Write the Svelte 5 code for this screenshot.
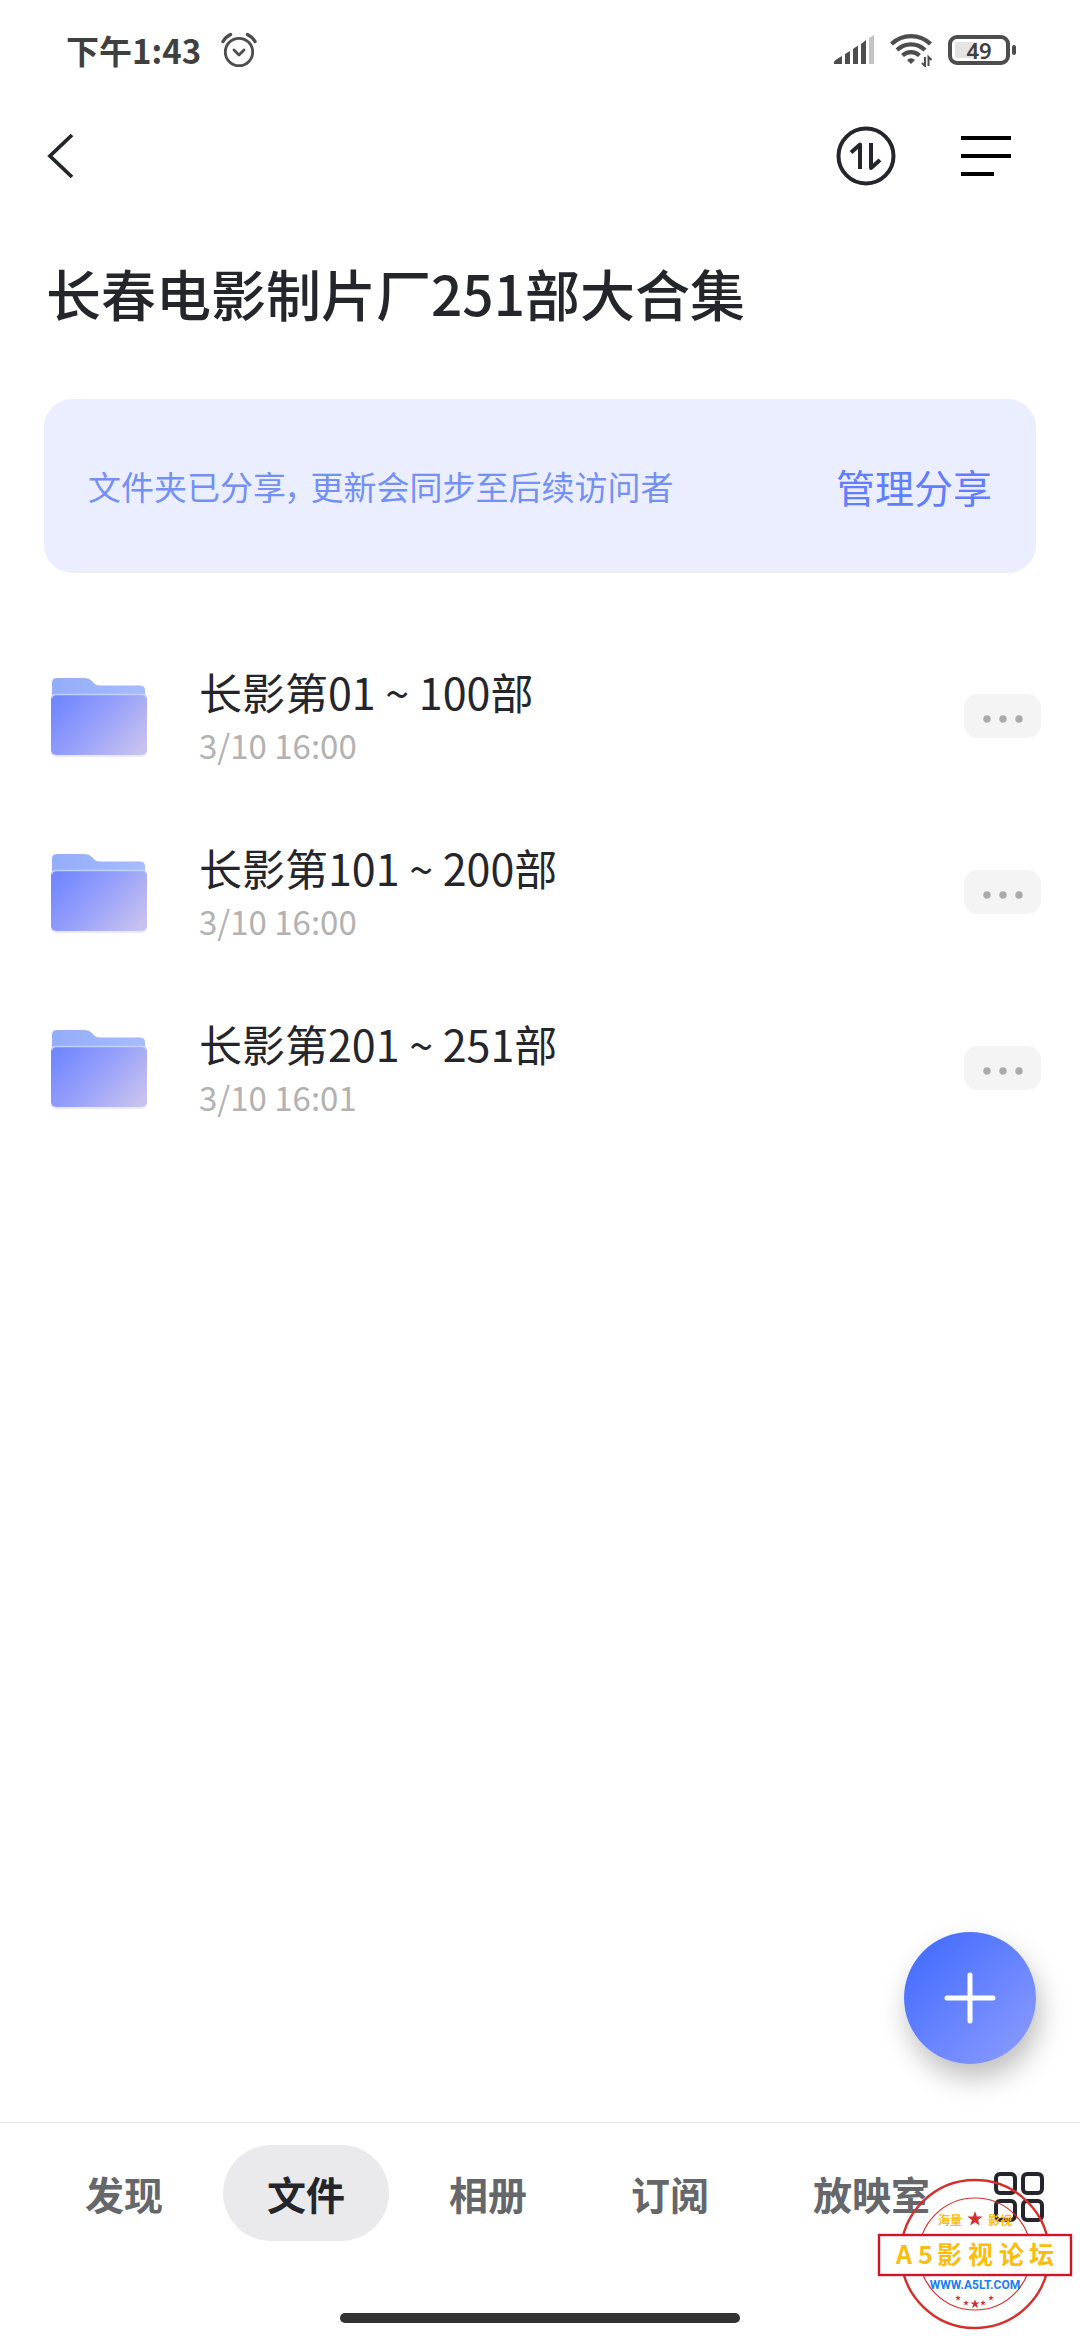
<script>
  const folders = [
    { name: '长影第01 ~ 100部', date: '3/10 16:00' },
    { name: '长影第101 ~ 200部', date: '3/10 16:00' },
    { name: '长影第201 ~ 251部', date: '3/10 16:01' }
  ];
  const tabs = ['发现', '文件', '相册', '订阅', '放映室'];
  let active = $state('文件');
  const star = 'M0 -10L2.4 -3.2L9.5 -3.1L3.8 1.2L5.9 8.1L0 4L-5.9 8.1L-3.8 1.2L-9.5 -3.1L-2.4 -3.2Z';
  const smallStars = [
    { x: 98, y: 148, s: 0.3 },
    { x: 106, y: 153, s: 0.3 },
    { x: 115, y: 154, s: 0.48 },
    { x: 123, y: 153, s: 0.3 },
    { x: 131, y: 148, s: 0.3 }
  ];
</script>

<div class="screen">
  <div class="status">
    <span class="time">下午1:43</span>
    <svg class="alarm" width="36" height="36" viewBox="0 0 36 36" fill="none" stroke="#4d4d4d" stroke-width="2.8" stroke-linecap="round">
      <circle cx="18" cy="20" r="13.7" />
      <path d="M13 18l5 5l5-5" stroke-linejoin="round" />
      <path d="M2 9.5Q4.5 5 9.500 2.500M34 9.500Q31.500 5 26.500 2.500" stroke-width="3.400" />
    </svg>
    <div class="signals">
      <svg width="40" height="30" viewBox="0 0 40 30" fill="#4d4d4d">
        <path d="M0 29V27Q0 25.500 8 21V29Z" />
        <path d="M11 29V19L16 16V29Z" />
        <path d="M19 29V14L24 10.500V29Z" />
        <path d="M27 29V9L32 5V29Z" />
        <path d="M35 29V3L40 0V29Z" fill="#c4c4c4" />
      </svg>
      <svg width="42" height="34" viewBox="0 0 42 34" fill="none" stroke="#4d4d4d" stroke-width="4.200">
        <path d="M1.500 11A28 28 0 0 1 40.500 11" />
        <path d="M7 17A20 20 0 0 1 35 17" />
        <path d="M12.500 22.500A12.500 12.500 0 0 1 29.500 22.500" />
        <path d="M17 27Q21 23.500 25 27L21 31Z" fill="#4d4d4d" stroke="none" />
        <path d="M35 24V33L32 30M38.500 33V24L41.500 27" stroke-width="2" />
      </svg>
      <div class="battery">49</div>
    </div>
  </div>

  <header>
    <button class="icon" aria-label="返回">
      <svg width="30" height="46" viewBox="0 0 30 46" fill="none" stroke="#25262b" stroke-width="3.800">
        <path d="M27 2L5 23L27 44" />
      </svg>
    </button>
    <div class="actions">
      <button class="icon" aria-label="传输列表">
        <svg width="60" height="60" viewBox="0 0 60 60" fill="none" stroke="#25262b" stroke-width="4">
          <circle cx="30" cy="30" r="27.500" />
          <path d="M15 26.500L24 18.500V43" stroke-linejoin="round" />
          <path d="M35 17V42L44 34" stroke-linejoin="round" />
        </svg>
      </button>
      <button class="icon" aria-label="菜单">
        <svg width="50" height="60" viewBox="0 0 50 60" stroke="#000" stroke-width="4">
          <path d="M0 12H50M0 30H50M0 48H33" />
        </svg>
      </button>
    </div>
  </header>

  <main>
    <h1>长春电影制片厂251部大合集</h1>
    <section class="banner">
      <p><span>文件夹已分享，</span><span>更新会同步至后续访问者</span></p>
      <a href="#share">管理分享</a>
    </section>
    <ul>
      {#each folders as folder}
        <li>
          <svg class="folder" width="104" height="88" viewBox="0 0 104 88">
            <defs>
              <linearGradient id="front" x1="0" y1="0.2" x2="1" y2="0.8">
                <stop offset="0" stop-color="#7287ff" />
                <stop offset="0.5" stop-color="#99a2fa" />
                <stop offset="1" stop-color="#c8c1f0" />
              </linearGradient>
              <linearGradient id="back" x1="0" y1="0" x2="1" y2="0">
                <stop offset="0" stop-color="#93adfb" />
                <stop offset="1" stop-color="#a6bdfc" />
              </linearGradient>
            </defs>
            <path d="M5 11Q5 6 10 6H38Q42 6 45 9L48 12Q50 13.500 53 13.500H93Q98 13.500 98 18.500V50H5Z" fill="url(#back)" />
            <rect x="4" y="24" width="96" height="61" rx="5" fill="#d9dcff" opacity="0.6" />
            <rect x="4" y="22" width="96" height="61" rx="5" fill="url(#front)" />
            <path d="M5 26Q5 22.500 9 22.500H95Q99 22.500 99 26" fill="none" stroke="#c3cffd" stroke-width="1.400" />
          </svg>
          <div class="info">
            <a href="#folder">{folder.name}</a>
            <time>{folder.date}</time>
          </div>
          <button class="more" aria-label="更多">
            <svg width="40" height="8" viewBox="0 0 40 8" fill="#aaa">
              <circle cx="4" cy="4" r="3.700" />
              <circle cx="20" cy="4" r="3.700" />
              <circle cx="36" cy="4" r="3.700" />
            </svg>
          </button>
        </li>
      {/each}
    </ul>
  </main>

  <button class="fab" aria-label="新建">
    <svg width="52" height="52" viewBox="0 0 52 52" stroke="#fff" stroke-width="5" stroke-linecap="round">
      <path d="M26 3V49M3 26H49" />
    </svg>
  </button>

  <footer>
    <nav>
      {#each tabs as tab}
        <button class="tab" class:active={tab === active} onclick={() => (active = tab)}>{tab}</button>
      {/each}
      <button class="icon grid" aria-label="全部">
        <svg width="50" height="50" viewBox="0 0 50 50" fill="none" stroke="#25262b" stroke-width="4">
          <rect x="2" y="2" width="19" height="19" rx="4" />
          <rect x="29" y="2" width="19" height="19" rx="4" />
          <rect x="2" y="29" width="19" height="19" rx="4" />
          <rect x="29" y="29" width="19" height="19" rx="4" />
        </svg>
      </button>
    </nav>
    <div class="home"></div>
  </footer>

  <svg class="stamp" width="220" height="190" viewBox="0 0 220 190">
    <g fill="none" stroke="#d3302c">
      <circle cx="115" cy="104" r="74" stroke-width="2.400" />
      <circle cx="115" cy="104" r="56" stroke-width="1.200" />
    </g>
    <rect x="19" y="85" width="192" height="40" fill="#fff" stroke="#d0142c" stroke-width="2.400" />
    <path d={star} transform="translate(115 69) scale(0.8)" fill="#d3302c" />
    {#each smallStars as s}
      <path d={star} transform="translate({s.x} {s.y}) scale({s.s})" fill="#d3302c" />
    {/each}
    <g class="gold">
      <text class="tag" x="78" y="75">海量</text>
      <text class="tag" x="128" y="75">影视</text>
      <text class="forum" x="36 58 77 108 139 169" y="114">A5影视论坛</text>
    </g>
    <text class="url" x="115" y="139" text-anchor="middle">WWW.A5LT.COM</text>
  </svg>
</div>

<style>
  :global(body) {
    margin: 0;
    background: #fff;
  }
  .screen {
    position: relative;
    display: flex;
    flex-direction: column;
    min-height: 100vh;
    background: #fff;
    color: #25262b;
    font-family: 'Noto Sans CJK SC', sans-serif;
  }
  svg {
    display: block;
  }
  button {
    padding: 0;
    border: 0;
    background: none;
    font: inherit;
    color: inherit;
    cursor: pointer;
  }
  a {
    color: inherit;
    text-decoration: none;
  }
  .status {
    display: flex;
    align-items: center;
    height: 100px;
    padding: 0 64px 0 66px;
    color: #404040;
  }
  .time {
    font-size: 33px;
    font-weight: 700;
    line-height: 48px;
  }
  .alarm {
    margin-left: 20px;
  }
  .signals {
    display: flex;
    align-items: center;
    gap: 16px;
    margin-left: auto;
  }
  .battery {
    position: relative;
    box-sizing: border-box;
    width: 62px;
    height: 30px;
    margin-right: 6px;
    border: 4px solid #4d4d4d;
    border-radius: 9px;
    background: linear-gradient(#e4e4e4, #e4e4e4) 3px 3px / 22px 16px no-repeat;
    font-family: 'Noto Sans', sans-serif;
    font-size: 22px;
    font-weight: 600;
    line-height: 22px;
    text-align: center;
  }
  .battery::after {
    content: '';
    position: absolute;
    top: 6px;
    right: -10px;
    width: 4px;
    height: 10px;
    border-radius: 2px;
    background: #4d4d4d;
  }
  header {
    display: flex;
    align-items: center;
    justify-content: space-between;
    height: 112px;
    padding: 0 69px 0 45px;
  }
  .actions {
    display: flex;
    gap: 65px;
  }
  main {
    flex: 1;
  }
  h1 {
    margin: 40px 44px 67px 46px;
    font-size: 55px;
    font-weight: 500;
    line-height: 80px;
  }
  .banner {
    display: flex;
    align-items: center;
    justify-content: space-between;
    margin: 0 44px;
    padding: 0 44px;
    min-height: 174px;
    border-radius: 28px;
    background: #ebeeff;
  }
  .banner p {
    display: flex;
    gap: 8px;
    margin: 0;
    font-size: 33px;
    font-feature-settings: 'palt';
    color: #7590f5;
  }
  .banner a {
    font-size: 39px;
    color: #637dff;
  }
  ul {
    margin: 55px 0 0;
    padding: 0;
    list-style: none;
  }
  li {
    display: flex;
    align-items: center;
    height: 176px;
    padding: 0 39px 0 47px;
  }
  .info {
    display: flex;
    flex-direction: column;
    flex: 1;
    margin-left: 48px;
    padding-bottom: 2px;
  }
  .info a {
    font-size: 43px;
    line-height: 60px;
  }
  .info time {
    font-size: 33px;
    line-height: 48px;
    color: #b2b2b2;
  }
  .more {
    display: flex;
    align-items: center;
    justify-content: center;
    width: 77px;
    height: 44px;
    padding-top: 6px;
    border-radius: 14px;
    background: #f4f4f4;
  }
  .fab {
    position: absolute;
    right: 44px;
    bottom: 276px;
    display: flex;
    align-items: center;
    justify-content: center;
    width: 132px;
    height: 132px;
    border-radius: 50%;
    background: linear-gradient(135deg, #446dff 10%, #8798ff 90%);
    box-shadow: 4px 14px 28px rgba(0, 0, 0, 0.26);
  }
  footer {
    border-top: 1px solid #e5e5e5;
  }
  nav {
    display: flex;
    align-items: center;
    gap: 16px;
    padding: 22px 36px 0 41px;
  }
  .tab {
    height: 96px;
    padding: 0 44px;
    border-radius: 48px;
    font-size: 39px;
    font-weight: 700;
    color: #66676a;
    white-space: nowrap;
  }
  .tab.active {
    background: #eaeaec;
    color: #25262b;
  }
  .grid {
    margin-left: auto;
    padding-top: 8px;
  }
  .home {
    width: 37%;
    height: 10px;
    margin: 72px auto 17px;
    border-radius: 5px;
    background: #333;
  }
  .stamp {
    position: absolute;
    right: 0;
    bottom: 0;
    pointer-events: none;
  }
  .gold {
    fill: #f9bd12;
    font-weight: 700;
  }
  .tag {
    font-size: 12px;
  }
  .forum {
    font-size: 25px;
  }
  .url {
    font-family: Roboto, sans-serif;
    font-size: 12px;
    font-weight: 700;
    fill: #2080ee;
  }
</style>
